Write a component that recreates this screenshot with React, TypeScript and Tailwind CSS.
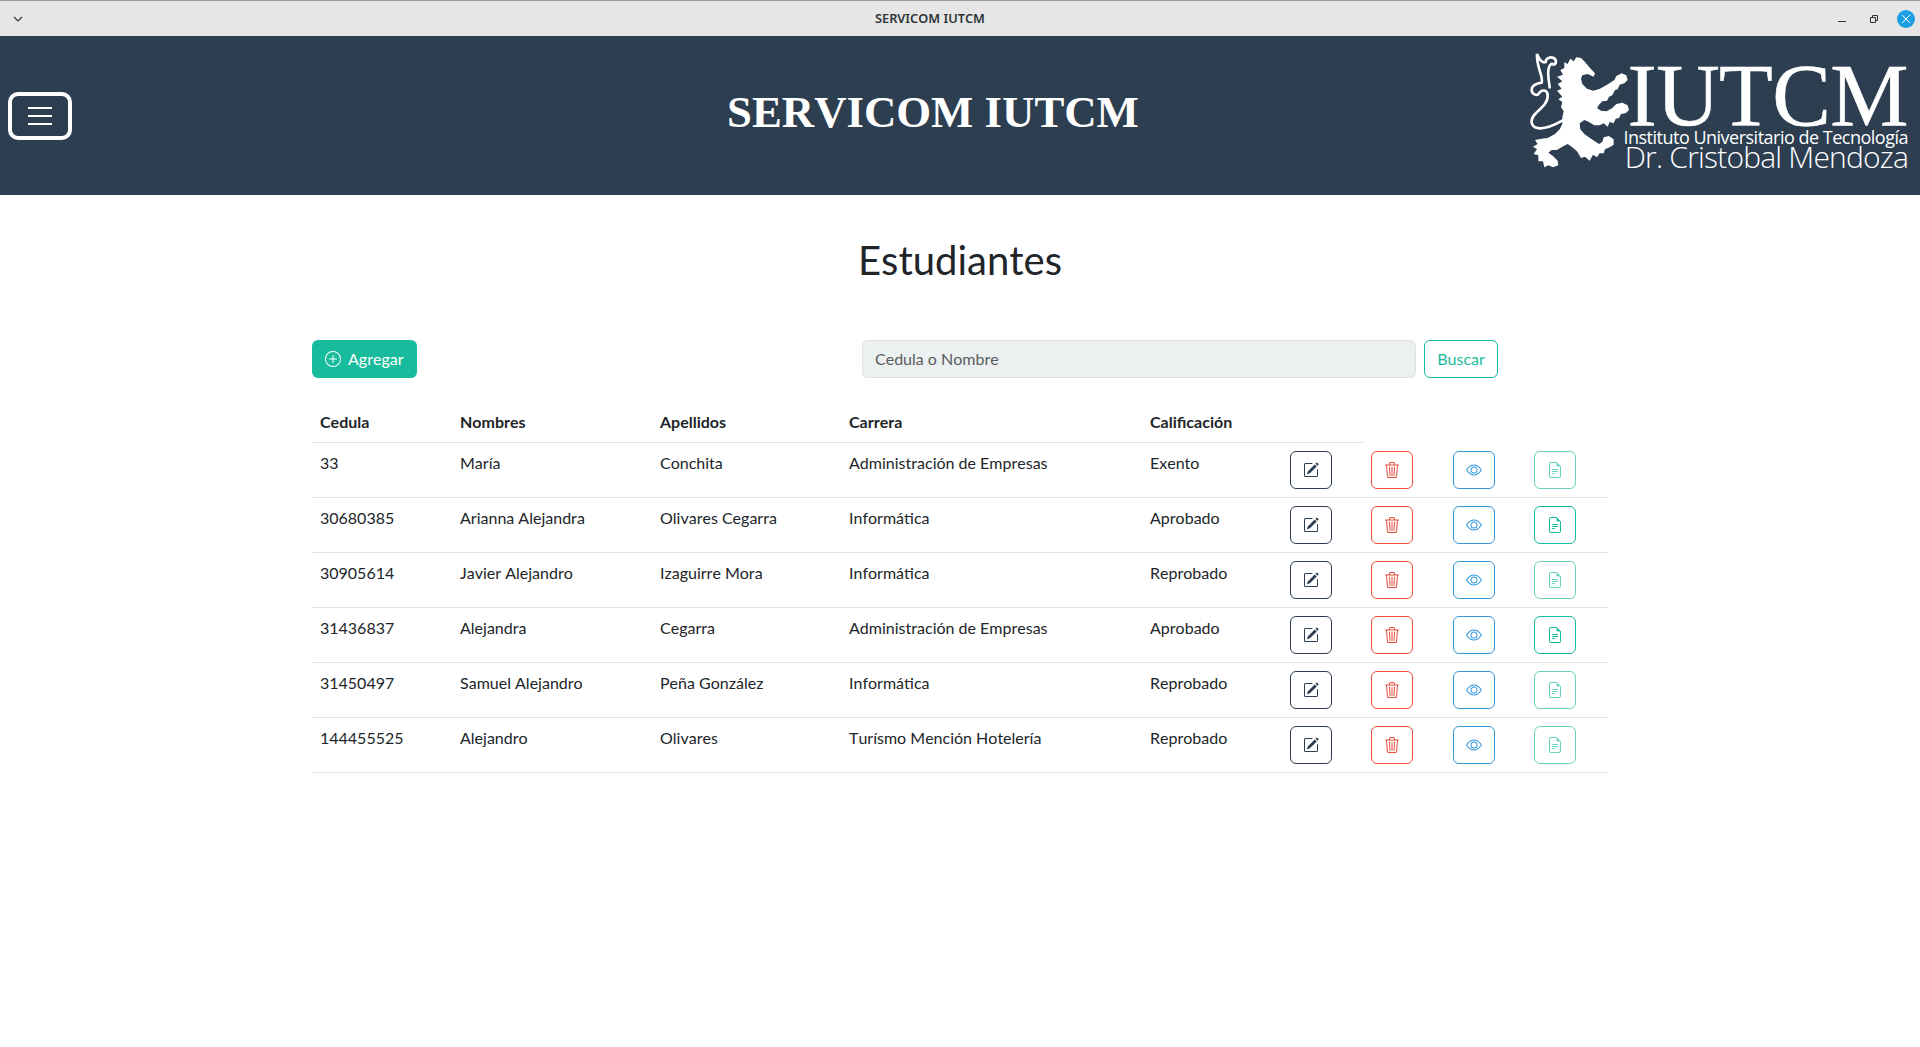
import { BsEye, BsFileEarmarkText, BsPencilSquare, BsPlusCircle, BsTrash3 } from 'react-icons/bs'

type Student = {
  cedula: string
  nombres: string
  apellidos: string
  carrera: string
  calificacion: string
}

const students: Student[] = [
  { cedula: '33', nombres: 'María', apellidos: 'Conchita', carrera: 'Administración de Empresas', calificacion: 'Exento' },
  { cedula: '30680385', nombres: 'Arianna Alejandra', apellidos: 'Olivares Cegarra', carrera: 'Informática', calificacion: 'Aprobado' },
  { cedula: '30905614', nombres: 'Javier Alejandro', apellidos: 'Izaguirre Mora', carrera: 'Informática', calificacion: 'Reprobado' },
  { cedula: '31436837', nombres: 'Alejandra', apellidos: 'Cegarra', carrera: 'Administración de Empresas', calificacion: 'Aprobado' },
  { cedula: '31450497', nombres: 'Samuel Alejandro', apellidos: 'Peña González', carrera: 'Informática', calificacion: 'Reprobado' },
  { cedula: '144455525', nombres: 'Alejandro', apellidos: 'Olivares', carrera: 'Turísmo Mención Hotelería', calificacion: 'Reprobado' },
]

function TitleBar() {
  return (
    <div className="flex h-9 items-center border-t border-[#9a9a9a] bg-[#e6e6e6] pl-[13px] pr-[5px]">
      <svg width="10" height="6" viewBox="0 0 10 6" fill="none" stroke="#333" strokeWidth="1.2">
        <path d="M1 1l4 4 4-4" />
      </svg>
      <span className="ml-[852px] font-['Noto_Sans',sans-serif] text-[12.75px] font-semibold text-[#2e3436]">
        SERVICOM IUTCM
      </span>
      <div className="ml-auto flex items-center">
        <span className="h-px w-2 translate-y-[3px] bg-[#333]" />
        <svg className="ml-6" width="8" height="8" viewBox="0 0 8 8" fill="none" stroke="#333">
          <path d="M.5 2.5h5v5h-5zM2.5 2.5v-2h5v5h-2" />
        </svg>
        <span className="ml-[19px] flex size-[18px] items-center justify-center rounded-full bg-[#1d9fe3]">
          <svg width="10" height="10" viewBox="0 0 10 10" stroke="#fff" strokeWidth="1">
            <path d="M1 1l8 8M9 1l-8 8" />
          </svg>
        </span>
      </div>
    </div>
  )
}

function Lion() {
  return (
    <svg width="110" height="126" viewBox="0 0 330 378" className="shrink-0" fill="#fff">
      <path d="M118 42L128 48 136 32 146 40 154 28 168 30 180 42 195 60 210 76 206 86 188 78 172 82 168 92 172 108 186 122 205 128 225 122 250 108 268 96 274 84 290 76 304 82 308 96 298 106 284 110 278 124 270 126 262 142 252 146 246 158 232 160 222 170 216 180 228 188 245 190 262 180 274 168 292 164 308 172 312 186 302 196 288 198 282 210 272 212 266 226 254 222 248 236 236 226 224 232 208 232 192 222 178 216 164 226 166 244 178 258 198 272 222 288 232 282 236 268 252 264 266 274 266 290 254 298 240 304 236 316 224 316 216 328 204 320 194 338 180 326 168 330 156 310 140 296 128 288 112 296 96 306 80 306 70 314 84 324 98 338 100 352 84 358 70 352 58 358 54 340 40 340 40 322 26 318 36 304 24 296 38 288 30 276 50 272 68 270 90 258 104 244 112 228 112 208 116 190 108 178 112 162 100 154 112 146 96 128 110 122 98 108 112 100 96 86 114 80 106 66 118 60z" />
      <path
        d="M112 218C80 236 48 246 30 238 14 228 18 208 34 194 54 176 70 162 68 140 66 124 50 124 42 136 36 146 20 138 20 126 20 112 36 106 50 104 56 84 34 60 36 18 44 38 52 46 62 42 62 30 76 26 86 30 96 36 94 48 86 50 78 44 72 52 70 66 68 84 72 100 74 118"
        fill="none"
        stroke="#fff"
        strokeWidth="8"
        strokeLinecap="round"
      />
    </svg>
  )
}

function Logo() {
  return (
    <div className="mb-[9px] ml-auto flex items-start text-white">
      <Lion />
      <div className="-ml-[10px] flex w-[283px] flex-col items-end pt-[19px]">
        <span className="font-['Liberation_Serif',serif] text-[88px] leading-[58px] tracking-[-0.6px] [-webkit-text-stroke:0.5px_white]">
          IUTCM
        </span>
        <span className="mt-[2px] whitespace-nowrap font-['Open_Sans',sans-serif] text-[18px] leading-[20px] tracking-[-0.5px]">
          Instituto Universitario de Tecnología
        </span>
        <span className="whitespace-nowrap font-['Open_Sans',sans-serif] text-[30px] font-light leading-[20px] tracking-[-0.8px]">
          Dr. Cristobal Mendoza
        </span>
      </div>
    </div>
  )
}

function Header() {
  return (
    <header className="flex h-[159px] items-center bg-[#2c3e50] pl-2 pr-3">
      <button type="button" className="flex h-12 w-16 flex-col items-center justify-center gap-[6px] rounded-[10px] border-4 border-white">
        <span className="h-0.5 w-6 bg-white" />
        <span className="h-0.5 w-6 bg-white" />
        <span className="h-0.5 w-6 bg-white" />
      </button>
      <h1 className="mb-[6px] ml-[655px] whitespace-nowrap font-['Liberation_Serif',serif] text-[44.8px] font-bold leading-none text-white">
        SERVICOM IUTCM
      </h1>
      <Logo />
    </header>
  )
}

function ActionButton({ color, dim, children }: { color: string; dim?: boolean; children: React.ReactNode }) {
  return (
    <button
      type="button"
      className={`flex h-[38px] w-[42px] items-center justify-center rounded-md border bg-white ${color} ${dim ? 'opacity-65' : ''}`}
    >
      {children}
    </button>
  )
}

function StudentRow({ student }: { student: Student }) {
  const canDownload = student.calificacion === 'Aprobado'
  return (
    <tr className="border-b border-[#dee2e6] align-top">
      <td className="p-2">{student.cedula}</td>
      <td className="p-2">{student.nombres}</td>
      <td className="p-2">{student.apellidos}</td>
      <td className="p-2">{student.carrera}</td>
      <td className="p-2">{student.calificacion}</td>
      <td className="p-2">
        <ActionButton color="border-[#2c3e50] text-[#2c3e50]">
          <BsPencilSquare size={16} />
        </ActionButton>
      </td>
      <td className="p-2">
        <ActionButton color="border-[#e74c3c] text-[#e74c3c]">
          <BsTrash3 size={16} />
        </ActionButton>
      </td>
      <td className="p-2">
        <ActionButton color="border-[#3498db] text-[#3498db]">
          <BsEye size={16} />
        </ActionButton>
      </td>
      <td className="p-2">
        <ActionButton color="border-[#18bc9c] text-[#18bc9c]" dim={!canDownload}>
          <BsFileEarmarkText size={16} />
        </ActionButton>
      </td>
    </tr>
  )
}

export default function App() {
  return (
    <div className="min-h-[1047px] bg-white font-['Lato',sans-serif] text-base text-[#212529] [font-kerning:none]">
      <TitleBar />
      <Header />
      <main className="mx-auto w-[1296px] pt-[41px]">
        <h2 className="text-center text-[40px] font-normal leading-[48px]">Estudiantes</h2>

        <div className="mt-14 flex items-center justify-between">
          <button type="button" className="flex h-[38px] w-[105px] items-center gap-[7px] rounded-md bg-[#18bc9c] px-[13px] text-white">
            <BsPlusCircle size={16} />
            Agregar
          </button>
          <form className="mr-[110px] flex w-[636px] gap-2">
            <input
              type="text"
              placeholder="Cedula o Nombre"
              className="h-[38px] flex-1 rounded-md border border-[#dee2e6] bg-[#ecf0f1] px-3 pb-px placeholder:text-[#595c5f]"
            />
            <button type="button" className="h-[38px] w-[74px] rounded-md border border-[#18bc9c] text-[#18bc9c]">
              Buscar
            </button>
          </form>
        </div>

        <table className="mt-6 w-full table-fixed border-collapse text-left">
          <colgroup>
            <col className="w-[140px]" />
            <col className="w-[200px]" />
            <col className="w-[189px]" />
            <col className="w-[301px]" />
            <col className="w-[140px]" />
            <col className="w-[81px]" />
            <col className="w-[82px]" />
            <col className="w-[81px]" />
            <col className="w-[82px]" />
          </colgroup>
          <thead>
            <tr>
              <th className="border-b border-[#dee2e6] p-2 font-bold">Cedula</th>
              <th className="border-b border-[#dee2e6] p-2 font-bold">Nombres</th>
              <th className="border-b border-[#dee2e6] p-2 font-bold">Apellidos</th>
              <th className="border-b border-[#dee2e6] p-2 font-bold">Carrera</th>
              <th className="border-b border-[#dee2e6] p-2 font-bold">Calificación</th>
              <th className="border-b border-[#dee2e6] p-2" />
            </tr>
          </thead>
          <tbody>
            {students.map((student) => (
              <StudentRow key={student.cedula} student={student} />
            ))}
          </tbody>
        </table>
      </main>
    </div>
  )
}
